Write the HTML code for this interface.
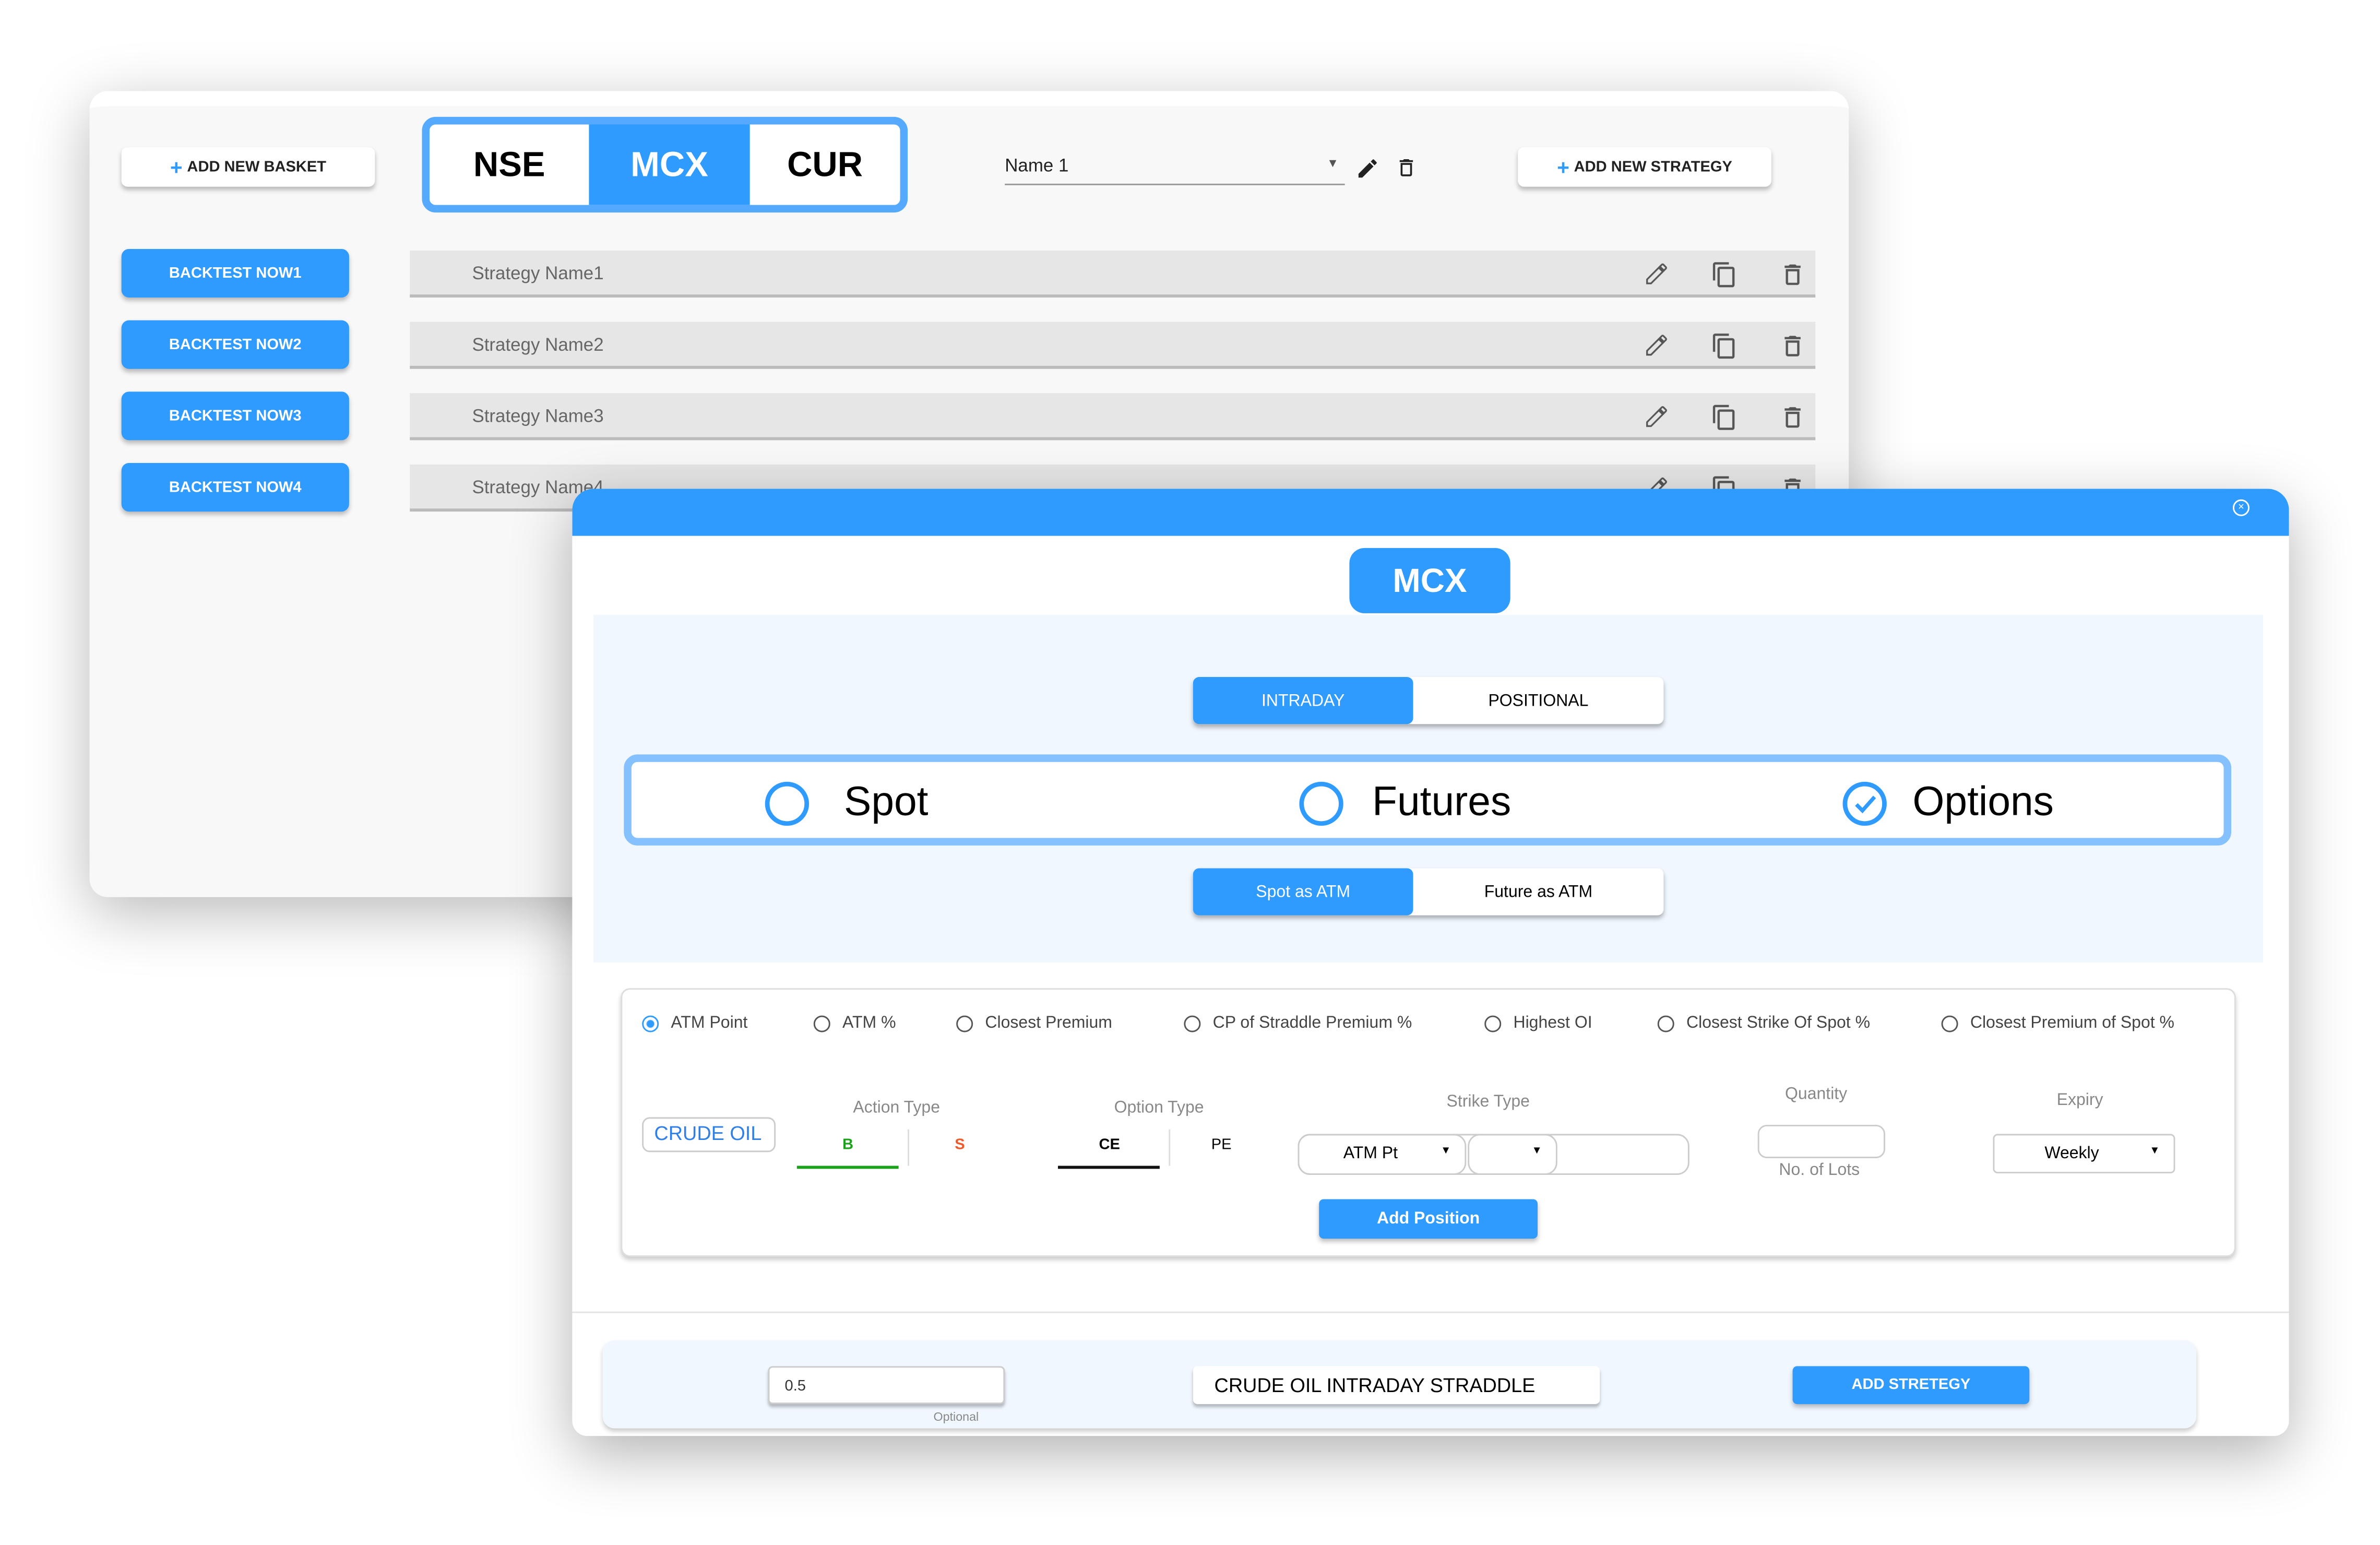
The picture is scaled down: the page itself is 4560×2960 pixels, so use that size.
<!DOCTYPE html>
<html><head><meta charset="utf-8"><style>
html,body{margin:0;padding:0;background:#fff;overflow:hidden}
body{width:4560px;height:2960px;position:relative}
#w{position:absolute;left:0;top:0;width:1568px;height:1018px;transform:scale(2.9082);transform-origin:0 0;font-family:"Liberation Sans",Arial,sans-serif}
.a{position:absolute;box-sizing:border-box}
.btnw{background:#fff;border-radius:4px;box-shadow:0 2px 3px rgba(0,0,0,.25);font-size:10px;font-weight:bold;color:#222;display:flex;align-items:center;justify-content:center}
.bt{background:#2f9bff;color:#fff;border-radius:5px;box-shadow:0 2px 3px rgba(0,0,0,.25);font-size:10px;font-weight:bold;display:flex;align-items:center;justify-content:center}
.row{background:#e6e6e6;border-bottom:2px solid #bbb;font-size:12px;color:#666;padding-left:41px;display:flex;align-items:center}
.ic{position:absolute;top:8px}
.tog{background:#fff;border-radius:4px;box-shadow:0 2px 3px rgba(0,0,0,.3);display:flex;font-size:11px}
.tog div{display:flex;align-items:center;justify-content:center}
.rad{position:absolute;top:668px;font-size:11px;color:#444;display:flex;align-items:center}
.rad i{display:inline-block;width:11px;height:11px;border:1.5px solid #555;border-radius:50%;margin-right:8px;box-sizing:border-box}
.lbl{position:absolute;font-size:11px;color:#888}
.inp{background:#fff;border:1.5px solid #ccc;border-radius:5px}
</style></head><body><div id="w">
<!-- back panel -->
<div class="a" style="left:59px;top:60px;width:1159px;height:531px;background:#f8f8f8;border-radius:12px;box-shadow:0 10px 40px rgba(0,0,0,.28);border-top:10px solid #fff"></div>
<div class="a btnw" style="left:80px;top:97px;width:167px;height:26px"><span style="color:#2f9bff;font-size:14px;margin-right:3px">+</span>ADD NEW BASKET</div>
<div class="a" style="left:278px;top:77px;width:320px;height:63px;border:5px solid #55aaff;border-radius:9px;background:#fff;display:flex;overflow:hidden;font-size:23px;font-weight:bold">
<div style="width:105px;display:flex;align-items:center;justify-content:center">NSE</div>
<div style="width:106px;background:#2f9bff;color:#fff;display:flex;align-items:center;justify-content:center">MCX</div>
<div style="flex:1;display:flex;align-items:center;justify-content:center">CUR</div></div>
<div class="a" style="left:662px;top:102px;width:224px;height:20px;border-bottom:1px solid #999;font-size:12px;color:#222">Name 1<span style="position:absolute;right:4px;top:1px;font-size:8px;color:#555">▼</span></div>
<svg class="a" style="left:893px;top:103px" width="16" height="16" viewBox="0 0 24 24"><path d="M3 17.25V21h3.75L17.8 9.94l-3.75-3.75zM20.7 7.04a1 1 0 0 0 0-1.41l-2.34-2.34a1 1 0 0 0-1.41 0l-1.83 1.83 3.75 3.75z" fill="#222"/></svg>
<svg class="a" style="left:919px;top:103px" width="15" height="15" viewBox="0 0 24 24"><path d="M6 19a2 2 0 0 0 2 2h8a2 2 0 0 0 2-2V7H6zM8 9h8v10H8zM15.5 4l-1-1h-5l-1 1H5v2h14V4z" fill="#222"/></svg>
<div class="a btnw" style="left:1000px;top:97px;width:167px;height:26px"><span style="color:#2f9bff;font-size:14px;margin-right:3px">+</span>ADD NEW STRATEGY</div>

<div class="a bt" style="left:80px;top:164px;width:150px;height:32px">BACKTEST NOW1</div>
<div class="a bt" style="left:80px;top:211px;width:150px;height:32px">BACKTEST NOW2</div>
<div class="a bt" style="left:80px;top:258px;width:150px;height:32px">BACKTEST NOW3</div>
<div class="a bt" style="left:80px;top:305px;width:150px;height:32px">BACKTEST NOW4</div>

<div class="a row" style="left:270px;top:165px;width:926px;height:31px">Strategy Name1</div>
<div class="a row" style="left:270px;top:212px;width:926px;height:31px">Strategy Name2</div>
<div class="a row" style="left:270px;top:259px;width:926px;height:31px">Strategy Name3</div>
<div class="a row" style="left:270px;top:306px;width:926px;height:31px">Strategy Name4</div>
<svg class="a" style="left:1083px;top:172px" width="1110" height="160" viewBox="0 0 1110 160">
<defs><g id="ic">
<path transform="translate(0,0) scale(0.7)" d="M3 17.25V21h3.75L17.8 9.94l-3.75-3.75zM20.7 7.04a1 1 0 0 0 0-1.41l-2.34-2.34a1 1 0 0 0-1.41 0l-1.83 1.83 3.75 3.75z" fill="none" stroke="#555" stroke-width="1.6"/>
<path transform="translate(44,0) scale(0.75)" d="M16 1H4a2 2 0 0 0-2 2v14h2V3h12zm3 4H8a2 2 0 0 0-2 2v14a2 2 0 0 0 2 2h11a2 2 0 0 0 2-2V7a2 2 0 0 0-2-2zm0 16H8V7h11z" fill="#555"/>
<path transform="translate(89,0) scale(0.75)" d="M6 19a2 2 0 0 0 2 2h8a2 2 0 0 0 2-2V7H6zM8 9h8v10H8zM15.5 4l-1-1h-5l-1 1H5v2h14V4z" fill="#555"/>
</g></defs>
<use href="#ic" y="0"/><use href="#ic" y="47"/><use href="#ic" y="94"/><use href="#ic" y="141"/></svg>

<!-- modal -->
<div class="a" style="left:377px;top:322px;width:1131px;height:624px;background:#fff;border-radius:14px 14px 10px 10px;box-shadow:0 12px 40px rgba(0,0,0,.3);overflow:hidden">
<div class="a" style="left:0;top:0;width:1131px;height:31px;background:#2f9bff"></div>
<div class="a" style="left:1094px;top:7px;width:11px;height:11px;border:1.3px solid #fff;border-radius:50%;color:#fff;font-size:7px;line-height:9px;text-align:center">×</div>
<div class="a" style="left:14px;top:83px;width:1100px;height:229px;background:#f0f7fe"></div>
<div class="a" style="left:0;top:542px;width:1131px;height:1px;background:#e3e3e3"></div>
</div>
<div class="a" style="left:889px;top:361px;width:106px;height:43px;background:#2f9bff;border-radius:10px;color:#fff;font-size:22px;font-weight:bold;display:flex;align-items:center;justify-content:center">MCX</div>
<div class="a tog" style="left:786px;top:446px;width:310px;height:31px"><div style="width:145px;background:#2f9bff;color:#fff;border-radius:4px">INTRADAY</div><div style="flex:1">POSITIONAL</div></div>
<div class="a" style="left:411px;top:497px;width:1059px;height:60px;border:5px solid #85c1ff;border-radius:9px;background:#fff;font-size:27px;color:#000">
<div class="a" style="left:88px;top:13px;width:29px;height:29px;border:3px solid #2f9bff;border-radius:50%"></div>
<div class="a" style="left:140px;top:11px">Spot</div>
<div class="a" style="left:440px;top:13px;width:29px;height:29px;border:3px solid #2f9bff;border-radius:50%"></div>
<div class="a" style="left:488px;top:11px">Futures</div>
<div class="a" style="left:798px;top:13px;width:29px;height:29px;border:3px solid #2f9bff;border-radius:50%"><svg width="23" height="23" viewBox="0 0 23 23" style="position:absolute;left:0;top:0"><path d="M6 12l4 4 8-9" fill="none" stroke="#2f9bff" stroke-width="2.5"/></svg></div>
<div class="a" style="left:844px;top:11px">Options</div>
</div>
<div class="a tog" style="left:786px;top:572px;width:310px;height:31px"><div style="width:145px;background:#2f9bff;color:#fff;border-radius:4px">Spot as ATM</div><div style="flex:1">Future as ATM</div></div>

<!-- options card -->
<div class="a" style="left:409px;top:651px;width:1064px;height:177px;background:#fff;border:1px solid #ddd;border-radius:6px;box-shadow:0 2px 3px rgba(0,0,0,.2)"></div>
<div class="rad" style="left:423px"><i style="border-color:#2f9bff;background:radial-gradient(#2f9bff 35%,#fff 45%)"></i>ATM Point</div>
<div class="rad" style="left:536px"><i></i>ATM %</div>
<div class="rad" style="left:630px"><i></i>Closest Premium</div>
<div class="rad" style="left:780px"><i></i>CP of Straddle Premium %</div>
<div class="rad" style="left:978px"><i></i>Highest OI</div>
<div class="rad" style="left:1092px"><i></i>Closest Strike Of Spot %</div>
<div class="rad" style="left:1279px"><i></i>Closest Premium of Spot %</div>
<div class="a inp" style="left:423px;top:736px;width:88px;height:23px;color:#2f7fe8;font-size:13px;padding-left:7px;line-height:20px">CRUDE OIL</div>
<div class="lbl" style="left:562px;top:724px">Action Type</div>
<div class="a" style="left:555px;top:749px;font-size:10px;font-weight:bold;color:#1aa31a">B</div>
<div class="a" style="left:598px;top:744px;width:1px;height:24px;background:#ddd"></div>
<div class="a" style="left:629px;top:749px;font-size:10px;font-weight:bold;color:#f05a28">S</div>
<div class="a" style="left:525px;top:768px;width:67px;height:2px;background:#1aa31a"></div>
<div class="lbl" style="left:734px;top:724px">Option Type</div>
<div class="a" style="left:724px;top:749px;font-size:10px;font-weight:bold">CE</div>
<div class="a" style="left:770px;top:744px;width:1px;height:24px;background:#ddd"></div>
<div class="a" style="left:798px;top:749px;font-size:10px">PE</div>
<div class="a" style="left:697px;top:768px;width:67px;height:2px;background:#111"></div>
<div class="lbl" style="left:953px;top:720px">Strike Type</div>
<div class="a inp" style="left:855px;top:747px;width:258px;height:27px;border-radius:8px"></div>
<div class="a" style="left:855px;top:747px;width:111px;height:27px;border:1.5px solid #ccc;border-radius:8px;font-size:11px;padding:6px 0 0 29px">ATM Pt<span style="position:absolute;right:9px;top:7px;font-size:7px">▼</span></div>
<div class="a" style="left:967px;top:747px;width:59px;height:27px;border:1.5px solid #ccc;border-radius:8px"><span style="position:absolute;right:9px;top:7px;font-size:7px">▼</span></div>
<div class="lbl" style="left:1176px;top:715px">Quantity</div>
<div class="a inp" style="left:1158px;top:741px;width:84px;height:22px;border-radius:6px"></div>
<div class="lbl" style="left:1172px;top:765px">No. of Lots</div>
<div class="lbl" style="left:1355px;top:719px">Expiry</div>
<div class="a inp" style="left:1313px;top:747px;width:120px;height:26px;border-radius:3px;font-size:11px;padding:6px 0 0 33px">Weekly<span style="position:absolute;right:9px;top:7px;font-size:7px">▼</span></div>
<div class="a bt" style="left:869px;top:790px;width:144px;height:26px;border-radius:3px;font-size:11px">Add Position</div>

<!-- bottom -->
<div class="a" style="left:397px;top:883px;width:1050px;height:58px;background:#f0f7fe;border-radius:8px;box-shadow:0 2px 3px rgba(0,0,0,.2)"></div>
<div class="a inp" style="left:506px;top:900px;width:156px;height:25px;border-radius:3px;box-shadow:0 2px 2px rgba(0,0,0,.25);font-size:10px;padding:7px 0 0 10px;color:#333">0.5</div>
<div class="a" style="left:615px;top:929px;font-size:8px;color:#888">Optional</div>
<div class="a" style="left:786px;top:900px;width:268px;height:25px;background:#fff;border-radius:3px;box-shadow:0 2px 2px rgba(0,0,0,.25);font-size:13px;padding:5px 0 0 14px">CRUDE OIL INTRADAY STRADDLE</div>
<div class="a bt" style="left:1181px;top:900px;width:156px;height:25px;border-radius:3px">ADD STRETEGY</div>
</div></body></html>
